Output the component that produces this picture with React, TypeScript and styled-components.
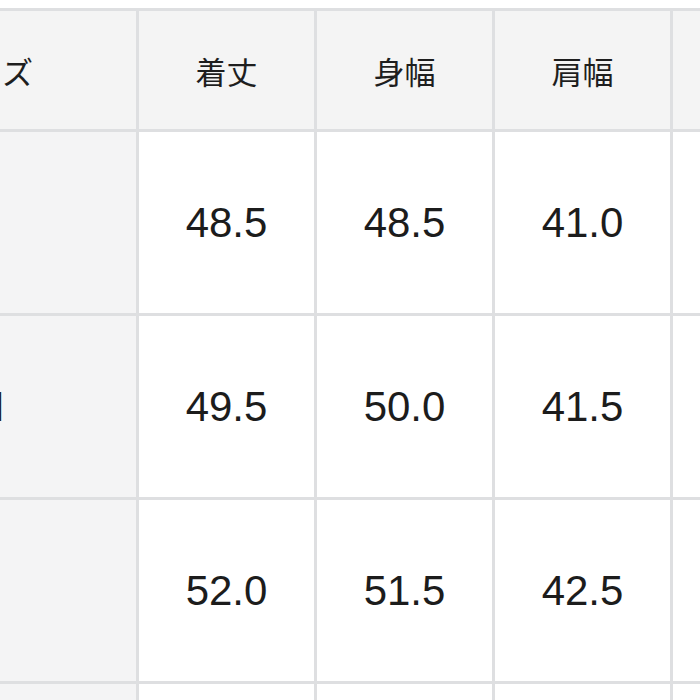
import {type FC} from "react";
import styled, {createGlobalStyle} from "styled-components";

const GlobalStyle = createGlobalStyle`
    html, body {
        margin: 0;
        padding: 0;
        background: #ffffff;
        overflow: hidden;
    }
`;

const headers = ["サイズ", "着丈", "身幅", "肩幅", "袖丈"];

const rows = [
    ["S", "48.5", "48.5", "41.0", "60.0"],
    ["M", "49.5", "50.0", "41.5", "61.0"],
    ["L", "52.0", "51.5", "42.5", "62.0"],
    ["XL", "53.5", "53.0", "44.0", "63.0"],
];

const App: FC = () => {
    return (
        <>
            <GlobalStyle/>
            <Page>
                <Table>
                    {headers.map((h) => (
                        <HeadCell key={h}>{h}</HeadCell>
                    ))}
                    {rows.map((row) =>
                        row.map((value, i) => (
                            <Cell key={row[0] + i} $label={i === 0}>
                                {value}
                            </Cell>
                        ))
                    )}
                </Table>
            </Page>
        </>
    );
};

export default App;

const Page = styled.div`
    width: 700px;
    height: 700px;
    overflow: hidden;
    padding-top: 8px;
    box-sizing: border-box;
    background: #ffffff;
`;

const Table = styled.div`
    display: grid;
    grid-template-columns: 298px repeat(4, 175px);
    grid-template-rows: 118px repeat(4, 181px);
    gap: 3px;
    padding: 3px;
    margin-left: -165px;
    width: max-content;
    background: #dedfe1;
`;

const HeadCell = styled.div`
    display: flex;
    align-items: center;
    justify-content: center;

    background: #f4f4f4;

    font-family: "Noto Sans CJK JP", "Liberation Sans", sans-serif;
    font-size: 31px;
    font-weight: 400;

    color: #1e1e1e;
`;

const Cell = styled.div<{ $label: boolean }>`
    display: flex;
    align-items: center;
    justify-content: center;

    background: ${p => p.$label ? "#f4f4f5" : "#ffffff"};

    font-family: "Liberation Sans", Arial, sans-serif;
    font-size: 42px;

    color: #1c1c1c;
`;
